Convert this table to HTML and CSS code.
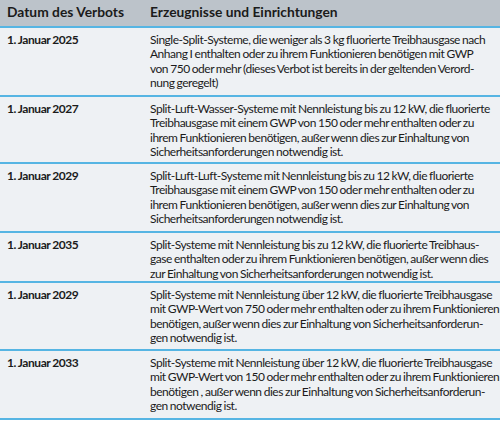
FILE: index.html
```html
<!DOCTYPE html>
<html lang="de">
<head>
<meta charset="utf-8">
<link rel="stylesheet" href="styles.css">
</head>
<body>
<div class="ban">
  <div class="row head">
    <div class="c-date">Datum des Verbots</div>
    <div class="c-text">Erzeugnisse und Einrichtungen</div>
  </div>
  <div class="row r1">
    <div class="c-date">1. Januar 2025</div>
    <div class="c-text">Single-Split-Systeme, die weniger als 3 kg fluorierte Treibhausgase nach<br>Anhang I enthalten oder zu ihrem Funktionieren benötigen mit GWP<br>von 750 oder mehr (dieses Verbot ist bereits in der geltenden Verord-<br>nung geregelt)</div>
  </div>
  <div class="row r2">
    <div class="c-date">1. Januar 2027</div>
    <div class="c-text">Split-Luft-Wasser-Systeme mit Nennleistung bis zu 12 kW, die fluorierte<br>Treibhausgase mit einem GWP von 150 oder mehr enthalten oder zu<br>ihrem Funktionieren benötigen, außer wenn dies zur Einhaltung von<br>Sicherheitsanforderungen notwendig ist.</div>
  </div>
  <div class="row r3">
    <div class="c-date">1. Januar 2029</div>
    <div class="c-text">Split-Luft-Luft-Systeme mit Nennleistung bis zu 12 kW, die fluorierte<br>Treibhausgase mit einem GWP von 150 oder mehr enthalten oder zu<br>ihrem Funktionieren benötigen, außer wenn dies zur Einhaltung von<br>Sicherheitsanforderungen notwendig ist.</div>
  </div>
  <div class="row r4">
    <div class="c-date">1. Januar 2035</div>
    <div class="c-text">Split-Systeme mit Nennleistung bis zu 12 kW, die fluorierte Treibhaus-<br>gase enthalten oder zu ihrem Funktionieren benötigen, außer wenn dies<br>zur Einhaltung von Sicherheitsanforderungen notwendig ist.</div>
  </div>
  <div class="row r5">
    <div class="c-date">1. Januar 2029</div>
    <div class="c-text">Split-Systeme mit Nennleistung über 12 kW, die fluorierte Treibhausgase<br>mit GWP-Wert von 750 oder mehr enthalten oder zu ihrem Funktionieren<br>benötigen, außer wenn dies zur Einhaltung von Sicherheitsanforderun-<br>gen notwendig ist.</div>
  </div>
  <div class="row r6">
    <div class="c-date">1. Januar 2033</div>
    <div class="c-text">Split-Systeme mit Nennleistung über 12 kW, die fluorierte Treibhausgase<br>mit GWP-Wert von 150 oder mehr enthalten oder zu ihrem Funktionieren<br>benötigen , außer wenn dies zur Einhaltung von Sicherheitsanforderun-<br>gen notwendig ist.</div>
  </div>
</div>
</body>
</html>
```

FILE: styles.css
```css
html, body {
  margin: 0;
  padding: 0;
  background: #ffffff;
}
body {
  width: 500px;
  height: 422px;
  overflow: hidden;
  font-family: Lato, "Open Sans", sans-serif;
  color: #1b1b1b;
}
.ban {
  width: 500px;
  background: #eef1f4;
  font-size: 12px;
  line-height: 14.4px;
  letter-spacing: -0.48px;
  word-spacing: -0.5px;
}
.row {
  display: grid;
  grid-template-columns: 150px 1fr;
  box-sizing: border-box;
  border-bottom: 2px solid #56b5e3;
  white-space: nowrap;
}
.c-date {
  padding-left: 7px;
}
.row.head {
  background: #bcc3ca;
  height: 28px;
  align-items: center;
  font-weight: 700;
  font-size: 13.8px;
  letter-spacing: 0;
  word-spacing: 0;
  padding-bottom: 1px;
}
.row:not(.head) {
  padding-top: 5px;
  align-items: start;
}
.row:not(.head) .c-date {
  font-weight: 700;
  font-size: 12px;
  letter-spacing: -0.4px;
  word-spacing: -0.5px;
}
.r1 { height: 69px; }
.r2 { height: 67px; }
.r3 { height: 69px; }
.r4 { height: 50px; }
.r5 { height: 68px; }
.r6 { height: 69px; }
```
